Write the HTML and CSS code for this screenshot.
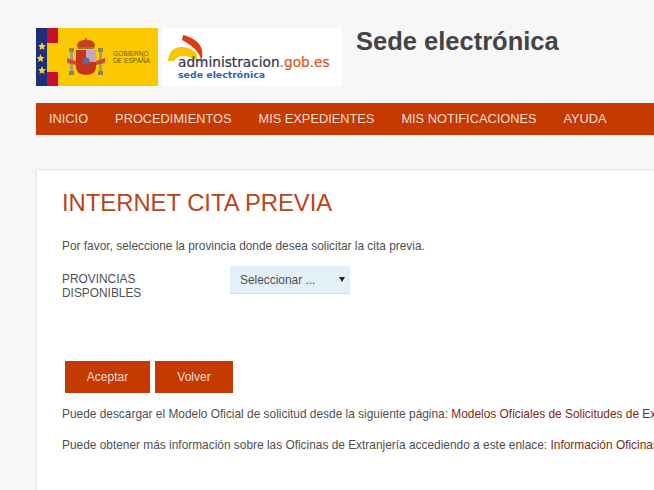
FILE: index.html
```html
<!DOCTYPE html>
<html lang="es">
<head>
    <meta charset="UTF-8">
    <title>Sede electrónica</title>
    <link rel="stylesheet" href="styles.css">
</head>
<body>
    <div class="page">
        <header class="top">
            <div class="logo-gob">
                <svg class="flag" width="22" height="58" viewBox="0 0 22 58">
                    <rect width="11" height="58" fill="#1c2f78"/>
                    <rect x="11" width="11" height="15" fill="#c8102e"/>
                    <rect x="11" y="44" width="11" height="14" fill="#c8102e"/>
                    <polygon points="6,14 7.2,17 10,17.3 7.8,19.2 8.5,22 6,20.5 3.5,22 4.2,19.2 2,17.3 4.8,17" fill="#f5d040"/>
                    <polygon points="4.5,26 5.7,29 8.5,29.3 6.3,31.2 7,34 4.5,32.5 2,34 2.7,31.2 0.5,29.3 3.3,29" fill="#f5d040"/>
                    <polygon points="6,38 7.2,41 10,41.3 7.8,43.2 8.5,46 6,44.5 3.5,46 4.2,43.2 2,41.3 4.8,41" fill="#f5d040"/>
                </svg>
                <svg class="arms" width="38" height="40" viewBox="0 0 38 40">
                    <rect x="2" y="11" width="5" height="4" fill="#8d8a5a"/>
                    <rect x="31" y="11" width="5" height="4" fill="#8d8a5a"/>
                    <rect x="3" y="15" width="3" height="20" fill="#a8a070"/>
                    <rect x="32" y="15" width="3" height="20" fill="#a8a070"/>
                    <rect x="2" y="34" width="5" height="4" fill="#7d8a5a"/>
                    <rect x="31" y="34" width="5" height="4" fill="#7d8a5a"/>
                    <path d="M0 21 L9 24 L9 28 L0 26Z M38 21 L29 24 L29 28 L38 26Z" fill="#c8503a"/>
                    <path d="M19 0 L20 3 Q27 3 28 8 L27 11 L11 11 L10 8 Q11 3 18 3Z" fill="#c4401f"/>
                    <rect x="11" y="10" width="16" height="2" fill="#a8741a"/>
                    <path d="M9 13 H29 V30 Q29 37 19 38 Q9 37 9 30Z" fill="#c8331f"/>
                    <rect x="19" y="13" width="10" height="12" fill="#c9a3bc"/>
                    <circle cx="19" cy="24" r="3.5" fill="#5a6a9a"/>
                </svg>
                <div class="gob-text">GOBIERNO<br>DE ESPAÑA</div>
            </div>
            <div class="logo-admin">
                <svg class="swoosh" width="38" height="32" viewBox="0 0 38 32">
                    <path d="M1 26 Q2 12 15 12 Q25 12 30 20 L30 26 L22 22 Q12 19 7 26Z" fill="#f7c600"/>
                    <path d="M16 0 Q32 4 35 15 Q36 21 34 25 Q32 14 15 5Z" fill="#dd3a10"/>
                </svg>
                <div class="admin-name">administracion<span class="gob-es">.gob.es</span></div>
                <div class="admin-sub">sede electrónica</div>
            </div>
            <div class="site-title">Sede electrónica</div>
        </header>

        <nav class="menu">
            <a href="#">INICIO</a>
            <a href="#">PROCEDIMIENTOS</a>
            <a href="#">MIS EXPEDIENTES</a>
            <a href="#">MIS NOTIFICACIONES</a>
            <a href="#">AYUDA</a>
        </nav>

        <section class="card">
            <h1>INTERNET CITA PREVIA</h1>
            <p class="intro">Por favor, seleccione la provincia donde desea solicitar la cita previa.</p>
            <div class="field">
                <label class="field-label">PROVINCIAS DISPONIBLES</label>
                <div class="fake-select">
                    <span>Seleccionar ...</span>
                    <span class="arrow"></span>
                </div>
            </div>
            <div class="actions">
                <button class="btn btn-accept">Aceptar</button>
                <button class="btn">Volver</button>
            </div>
            <p class="note">Puede descargar el Modelo Oficial de solicitud desde la siguiente página: <a href="#">Modelos Oficiales de Solicitudes de Extranjería</a></p>
            <p class="note">Puede obtener más información sobre las Oficinas de Extranjería accediendo a este enlace: <a href="#">Información Oficinas de Extranjería</a></p>
        </section>
    </div>
</body>
</html>
```

FILE: styles.css
```css
html, body {
    margin: 0;
    padding: 0;
    height: 490px;
    overflow: hidden;
}
body {
    background-color: #f7f7f7;
    color: #4f4f4f;
    font-family: "Liberation Sans", Arial, sans-serif;
}
.page {
    width: 1000px;
    padding: 28px 0 0 36px;
}
.top {
    display: flex;
    align-items: flex-start;
    height: 58px;
}
.logo-gob {
    width: 122px;
    height: 58px;
    background-color: #fcc900;
    display: flex;
    align-items: center;
}
.flag,
.arms,
.swoosh {
    filter: blur(0.4px);
}
.flag {
    flex: none;
}
.arms {
    margin-left: 9px;
    flex: none;
}
.gob-text {
    margin-left: 8px;
    font-size: 6.6px;
    line-height: 7.5px;
    color: #6a5a1a;
    white-space: nowrap;
}
.logo-admin {
    position: relative;
    width: 180px;
    height: 58px;
    margin-left: 4px;
    background-color: #fff;
    overflow: hidden;
}
.swoosh {
    position: absolute;
    left: 5px;
    top: 7px;
}
.admin-name {
    position: absolute;
    left: 16px;
    top: 25px;
    font-family: "DejaVu Sans", sans-serif;
    font-size: 13.7px;
    line-height: 18px;
    color: #33334a;
    -webkit-text-stroke: 0.2px;
    white-space: nowrap;
}
.gob-es {
    color: #d9572b;
}
.admin-sub {
    position: absolute;
    left: 16px;
    top: 40px;
    font-family: "DejaVu Sans", sans-serif;
    font-size: 9.4px;
    font-weight: bold;
    line-height: 13px;
    color: #2a65a8;
    white-space: nowrap;
}
.site-title {
    margin-left: 14px;
    font-size: 25.5px;
    font-weight: bold;
    line-height: 26px;
    color: #444;
}
.menu {
    display: flex;
    gap: 27px;
    height: 32px;
    margin-top: 17px;
    padding-left: 13px;
    padding-bottom: 1px;
    box-sizing: border-box;
    background-color: #c43a00;
    align-items: center;
}
.menu a {
    color: #f3ddd0;
    font-size: 12.8px;
    text-decoration: none;
}
.card {
    height: 400px;
    margin-top: 34px;
    padding: 18px 25px 0;
    background-color: #fff;
    border: 1px solid #e6e6e6;
}
h1 {
    margin: 0;
    font-size: 23.8px;
    font-weight: normal;
    line-height: 29px;
    color: #b8441a;
}
.intro {
    margin: 22px 0 0;
    font-size: 11.9px;
    line-height: 14px;
}
.field {
    display: flex;
    margin-top: 13px;
}
.field-label {
    display: block;
    width: 100px;
    margin-right: 68px;
    padding-top: 6px;
    font-size: 11.9px;
    line-height: 14px;
}
.fake-select {
    width: 120px;
    height: 28px;
    padding: 0 5px 0 10px;
    box-sizing: border-box;
    display: flex;
    justify-content: space-between;
    align-items: center;
    background-color: #e4f0f7;
    border-bottom: 1px solid #d5dfe5;
    font-size: 11.9px;
}
.arrow {
    width: 0;
    height: 0;
    border-left: 3px solid transparent;
    border-right: 3px solid transparent;
    border-top: 5px solid #222;
}
.actions {
    display: flex;
    gap: 5px;
    margin-top: 61px;
    margin-left: 3px;
}
.btn {
    width: 78px;
    height: 32px;
    padding: 0;
    border: none;
    background-color: #c43a00;
    color: #f3ddd0;
    font-family: "Liberation Sans", Arial, sans-serif;
    font-size: 12px;
}
.btn-accept {
    width: 85px;
}
.note {
    margin: 14px 0 0;
    font-size: 11.9px;
    line-height: 14px;
    white-space: nowrap;
}
.note + .note {
    margin-top: 17px;
}
.note a {
    color: #7a2a12;
    text-decoration: none;
}
```
